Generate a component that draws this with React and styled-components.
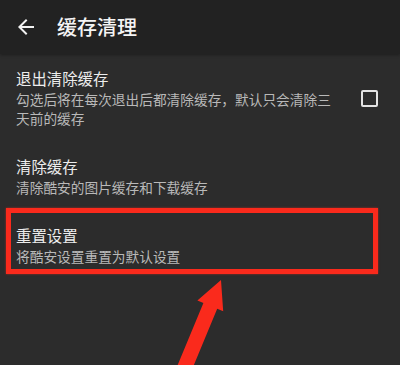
import React from "react";
import styled, { createGlobalStyle } from "styled-components";

const Global = createGlobalStyle`
  html, body { margin: 0; padding: 0; background: #2c2c2c; }
  body { font-family: "Noto Sans CJK SC", "Noto Sans", sans-serif; }
  * { box-sizing: border-box; }
`;

const Page = styled.div`
  position: relative;
  width: 400px;
  height: 365px;
  overflow: hidden;
  background: #2c2c2c;
`;

const Toolbar = styled.header`
  height: 54px;
  display: flex;
  align-items: center;
  background: #222222;
  box-shadow: 0 1px 3px rgba(0, 0, 0, 0.35);
  padding-left: 14px;
`;

const BackButton = styled.div`
  width: 24px;
  height: 24px;
  display: flex;
  color: #f2f2f2;
  margin-right: 19px;
`;

const Title = styled.h1`
  margin: 0;
  font-size: 20px;
  font-weight: 500;
  color: #f4f4f4;
  line-height: 24px;
  margin-top: -1px;
`;

const List = styled.div`
  display: flex;
  flex-direction: column;
`;

const Item = styled.div`
  display: flex;
  align-items: center;
  padding: 14px 22px 14px 16px;
  gap: 20px;
`;

const Texts = styled.div`
  flex: 1;
  display: flex;
  flex-direction: column;
  gap: 2px;
`;

const ItemTitle = styled.div`
  font-size: 15.4px;
  line-height: 20px;
  color: #ededed;
`;

const ItemSub = styled.div`
  font-size: 13.7px;
  line-height: 19px;
  color: #b9b9b9;
`;

const Checkbox = styled.div`
  width: 17px;
  height: 17px;
  border: 2px solid #e4e4e4;
  border-radius: 2px;
  flex-shrink: 0;
`;

const Highlight = styled.div`
  position: absolute;
  left: 6px;
  top: 208px;
  width: 372px;
  height: 66px;
  border: 5px solid #fa2a1c;
  box-shadow: 0 0 2px rgba(250, 42, 28, 0.6);
  pointer-events: none;
`;

const Arrow = styled.svg`
  position: absolute;
  left: 0;
  top: 0;
  pointer-events: none;
`;

export default function App() {
  return (
    <Page>
      <Global />
      <Toolbar>
        <BackButton>
          <svg width="24" height="24" viewBox="0 0 24 24" fill="currentColor">
            <path d="M20 11H7.83l5.59-5.59L12 4l-8 8 8 8 1.41-1.41L7.83 13H20v-2z" />
          </svg>
        </BackButton>
        <Title>缓存清理</Title>
      </Toolbar>
      <List>
        <Item>
          <Texts>
            <ItemTitle>退出清除缓存</ItemTitle>
            <ItemSub>勾选后将在每次退出后都清除缓存，默认只会清除三天前的缓存</ItemSub>
          </Texts>
          <Checkbox />
        </Item>
        <Item>
          <Texts>
            <ItemTitle>清除缓存</ItemTitle>
            <ItemSub>清除酷安的图片缓存和下载缓存</ItemSub>
          </Texts>
        </Item>
        <Item>
          <Texts>
            <ItemTitle>重置设置</ItemTitle>
            <ItemSub>将酷安设置重置为默认设置</ItemSub>
          </Texts>
        </Item>
      </List>
      <Highlight />
      <Arrow width="400" height="365" viewBox="0 0 400 365">
        <polygon
          fill="#fa2a1c"
          points="221,280 223.2,311.3 217.2,308.8 190.6,372.9 176.8,367.1 203.4,303 197.4,300.5"
        />
      </Arrow>
    </Page>
  );
}
